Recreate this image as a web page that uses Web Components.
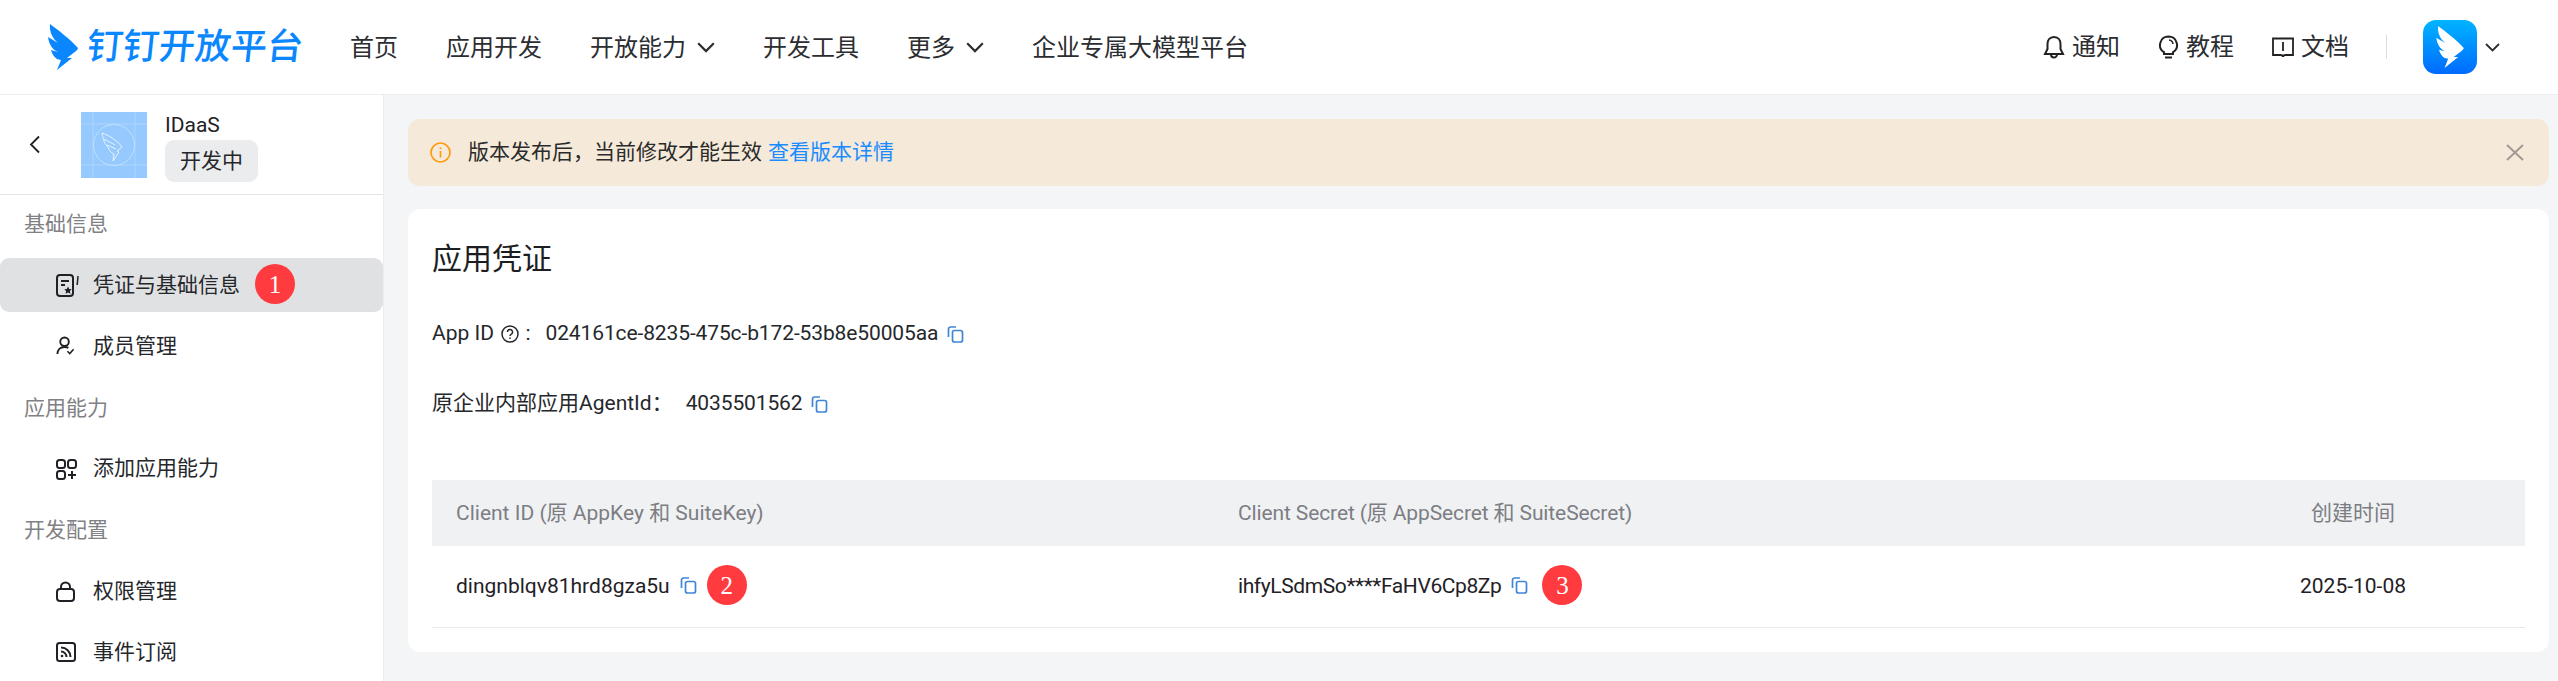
<!DOCTYPE html>
<html lang="zh-CN">
<head>
<meta charset="utf-8">
<title>钉钉开放平台</title>
<style>
  html, body { margin: 0; height: 100%; overflow: hidden; }
  body {
    font: 21px/1.5 Roboto, "Noto Sans CJK SC", sans-serif;
    color: #1f2126;
    background: #f4f5f7;
  }
</style>
</head>
<body>

<dev-console>
  <top-bar slot="top"></top-bar>
  <side-menu slot="side">
    <app-summary name="IDaaS" state="开发中"></app-summary>
    <menu-label>基础信息</menu-label>
    <menu-item icon="doc" active>凭证与基础信息<step-badge slot="extra">1</step-badge></menu-item>
    <menu-item icon="member">成员管理</menu-item>
    <menu-label>应用能力</menu-label>
    <menu-item icon="apps">添加应用能力</menu-item>
    <menu-label>开发配置</menu-label>
    <menu-item icon="lock">权限管理</menu-item>
    <menu-item icon="rss">事件订阅</menu-item>
  </side-menu>
  <notice-bar link="查看版本详情">版本发布后，当前修改才能生效</notice-bar>
  <cred-card heading="应用凭证">
    <cred-line gap="15">
      <span slot="label">App ID <help-mark></help-mark> :</span>
      <span>024161ce-8235-475c-b172-53b8e50005aa</span>
    </cred-line>
    <cred-line gap="13">
      <span slot="label">原企业内部应用AgentId：</span>
      <span>4035501562</span>
    </cred-line>
    <cred-table slot="table">
      <span slot="h1">Client ID (原 AppKey 和 SuiteKey)</span>
      <span slot="h2" style="letter-spacing:-.12px">Client Secret (原 AppSecret 和 SuiteSecret)</span>
      <span slot="h3">创建时间</span>
      <copy-text slot="c1" step="2" gap="10">dingnblqv81hrd8gza5u</copy-text>
      <copy-text slot="c2" step="3" gap="14" style="letter-spacing:-.4px">ihfyLSdmSo****FaHV6Cp8Zp</copy-text>
      <span slot="c3">2025-10-08</span>
    </cred-table>
  </cred-card>
</dev-console>

<script>
const chevron = (w, h) => `<svg width="${w}" height="${h}" viewBox="0 0 15 9" fill="none" stroke="currentColor" stroke-width="1.800"><path d="M1 1l6.500 6.500L14 1"/></svg>`;

const bird = (w, h) => `<svg width="${w}" height="${h}" viewBox="0 0 30 46"><path fill="currentColor" d="M2 0C10 6 22 15 30 24C30 25 29 26 28 27L19 34L24 34L9 46L13 36L9 35C6 33 4 30 3 26L10 28C5 26 1 21 0 13L10 19C5 15 1 8 2 0Z"/></svg>`;

const copyIcon = `<svg width="17" height="17" viewBox="0 0 17 17" fill="none" stroke="#3f86d8" stroke-width="1.700"><path d="M1.500 11V3A2 2 0 0 1 3.500 1H9"/><rect x="5.500" y="4.500" width="10" height="11.500" rx="2"/></svg>`;

const menuIcons = {
  doc: `<svg width="24" height="23" viewBox="0 0 24 23" fill="none" stroke="#1f2126" stroke-width="2"><rect x="1" y="1" width="16" height="21" rx="3"/><path d="M5 7h8M5 11h4"/><path d="M12 12.500l1.200 2.500 2.600.3-1.900 1.800.5 2.600-2.400-1.300-2.400 1.300.5-2.600-1.900-1.800 2.600-.3z" fill="#1f2126" stroke="none"/><path d="M22 2l-.8 9" stroke-width="1.500"/></svg>`,
  member: `<svg width="19" height="19" style="margin-top:-3px" viewBox="0 0 20 20" fill="none" stroke="#1f2126" stroke-width="2"><circle cx="9" cy="6" r="4.500"/><path d="M1.500 19c0-4.500 3-7.500 7.500-7.500 1.500 0 3 .4 4 1"/><path d="M12 16l2.500 2.500L18.500 14" stroke-width="1.600"/></svg>`,
  apps: `<svg width="21" height="21" viewBox="0 0 21 21" fill="none" stroke="#1f2126" stroke-width="2"><rect x="1" y="1" width="8" height="8" rx="2.500"/><rect x="12" y="1" width="8" height="8" rx="2.500"/><rect x="1" y="12" width="8" height="8" rx="2.500"/><path d="M16 12v8M12 16h8"/></svg>`,
  lock: `<svg width="19" height="21" viewBox="0 0 19 21" fill="none" stroke="#1f2126" stroke-width="2"><rect x="1" y="8" width="17" height="12" rx="3"/><path d="M5 8V6a4.500 4.500 0 0 1 9 0v2"/></svg>`,
  rss: `<svg width="20" height="20" style="margin-top:-2px" viewBox="0 0 20 20" fill="none" stroke="#1f2126" stroke-width="2"><rect x="1" y="1" width="18" height="18" rx="2.500"/><path d="M5 5.500a9.500 9.500 0 0 1 9.500 9.500M5 9.500a5.500 5.500 0 0 1 5.500 5.500"/><circle cx="6" cy="14" r="1.300" fill="#1f2126" stroke="none"/></svg>`
};

class DevConsole extends HTMLElement {
  constructor() {
    super();
    this.attachShadow({mode: 'open'});
    this.shadowRoot.innerHTML = `
      <style>
        :host { display: flex; flex-direction: column; height: 100vh; }
        .body { flex: 1; display: flex; min-height: 0; }
        main { flex: 1; min-width: 0; padding: 24px 9px 0 24px; display: flex; flex-direction: column; gap: 23px; }
      </style>
      <slot name="top"></slot>
      <div class="body">
        <slot name="side"></slot>
        <main><slot></slot></main>
      </div>
    `;
  }
}

class TopBar extends HTMLElement {
  constructor() {
    super();
    this.attachShadow({mode: 'open'});
    this.shadowRoot.innerHTML = `
      <style>
        :host {
          display: flex; align-items: center; flex: none;
          box-sizing: border-box; height: 95px;
          padding: 0 58px 0 48px;
          background: #fff; border-bottom: 1px solid #ebedf0;
          font-size: 24px; color: #2b2d31;
        }
        :host * { box-sizing: border-box; }
        .logo { display: flex; align-items: center; gap: 9px; width: 302px; color: #0a87ff; }
        .logo svg { display: block; margin-top: -1px; }
        .logo b {
          font-size: 36px; line-height: 46px; font-weight: 500; white-space: nowrap;
          transform: skewX(-6deg);
        }
        nav { display: flex; gap: 48px; margin-top: 1px; }
        nav a { display: flex; align-items: center; gap: 11px; }
        .tools { margin-left: auto; display: flex; align-items: center; }
        .tools a { display: flex; align-items: center; gap: 7px; margin-right: 38px; }
        .rule { width: 1px; height: 24px; background: #dcdee0; margin-right: 36px; }
        .avatar {
          width: 54px; height: 54px; border-radius: 13px;
          background: linear-gradient(#00b4ff, #006aff);
          display: flex; align-items: center; justify-content: center; color: #fff;
          margin-right: 8px;
        }
      </style>
      <div class="logo">
        ${bird(30, 46)}
        <b>钉钉开放平台</b>
      </div>
      <nav>
        <a>首页</a>
        <a>应用开发</a>
        <a>开放能力 ${chevron(18, 11)}</a>
        <a>开发工具</a>
        <a>更多 ${chevron(18, 11)}</a>
        <a>企业专属大模型平台</a>
      </nav>
      <div class="tools">
        <a><svg width="22" height="24" viewBox="0 0 22 24" fill="none" stroke="#222" stroke-width="2"><path d="M11 2C6.500 2 4.500 5.500 4.500 9v5L2 19h18l-2.500-5V9C17.500 5.500 15.500 2 11 2Z"/><path d="M8 19.500a3 3 0 0 0 6 0"/></svg>通知</a>
        <a><svg width="21" height="24" viewBox="0 0 21 24" fill="none" stroke="#222" stroke-width="2"><path d="M10.500 1.500a8.500 8.500 0 0 0-4.500 15.700V19h9v-1.800a8.500 8.500 0 0 0-4.500-15.700Z"/><path d="M7 22.500h7"/><path d="M11 5a4.500 4.500 0 0 1 4 4" stroke-width="1.500"/></svg>教程</a>
        <a style="margin-right:37px"><svg width="22" height="23" viewBox="0 0 22 23" fill="none" stroke="#222" stroke-width="1.800"><path d="M1 2.500h20V19h-7.500q-2.500 0-2.500 2 0-2-2.500-2H1Z"/><path d="M11 6v9"/></svg>文档</a>
        <span class="rule"></span>
        <span class="avatar">${bird(28, 42)}</span>
        ${chevron(15, 9)}
      </div>
    `;
  }
}

class SideMenu extends HTMLElement {
  constructor() {
    super();
    this.attachShadow({mode: 'open'});
    this.shadowRoot.innerHTML = `
      <style>
        :host {
          display: flex; flex-direction: column; flex: none;
          box-sizing: border-box; width: 384px; height: 100%;
          background: #fff; border-right: 1px solid #ebedf0; overflow: hidden;
        }
        .list { display: flex; flex-direction: column; gap: 7.25px; padding-top: 2px; }
      </style>
      <slot name="head"></slot>
      <div class="list"><slot></slot></div>
    `;
    this.querySelector('app-summary').slot = 'head';
  }
}

class AppSummary extends HTMLElement {
  constructor() {
    super();
    this.attachShadow({mode: 'open'});
    this.shadowRoot.innerHTML = `
      <style>
        :host {
          display: flex; align-items: center; flex: none;
          box-sizing: border-box; height: 100px; padding: 0 0 0 29px;
          border-bottom: 1px solid #e3e4e6;
        }
        .back { width: 11px; height: 19px; margin-right: 41px; color: #1f2126; }
        .tile { width: 66px; height: 66px; margin-right: 18px; flex: none; display: block; margin-top: 1px; }
        .meta { margin-top: 2px; }
        .name { line-height: 30px; }
        .tag {
          display: inline-block; height: 42px; line-height: 42px; padding: 0 15px;
          background: #ebecee; border-radius: 9px; color: #25272b;
        }
      </style>
      <svg class="back" viewBox="0 0 11 19" fill="none" stroke="currentColor" stroke-width="1.800"><path d="M10 1.500L2 9.500l8 8"/></svg>
      <svg class="tile" viewBox="0 0 66 66">
        <rect width="66" height="66" fill="#96c9fd"/>
        <g fill="none" stroke-width="1">
          <path stroke="#aed6fe" d="M12 0v66M54 0v66M0 12h66M0 53h66"/>
          <circle stroke="#bfe0ff" cx="33" cy="33" r="20.500"/>
          <path stroke="#e8f3ff" d="M21 21c6 2 15 7 20 14l-5 4 2 1-6 9 1-7c-3-1-5-4-6-7-3-2-5-8-6-14Z"/>
          <path stroke="#e8f3ff" d="M23 27l11 6M26 33l9 4"/>
        </g>
      </svg>
      <div class="meta">
        <div class="name">${this.getAttribute('name')}</div>
        <span class="tag">${this.getAttribute('state')}</span>
      </div>
    `;
  }
}

class MenuLabel extends HTMLElement {
  constructor() {
    super();
    this.attachShadow({mode: 'open'});
    this.shadowRoot.innerHTML = `
      <style>
        :host { display: flex; align-items: center; box-sizing: border-box; height: 54px; padding: 1px 0 0 24px; color: #7f8185; }
      </style>
      <slot></slot>
    `;
  }
}

class MenuItem extends HTMLElement {
  constructor() {
    super();
    this.attachShadow({mode: 'open'});
    const icon = menuIcons[this.getAttribute('icon')];
    this.shadowRoot.innerHTML = `
      <style>
        :host {
          display: flex; align-items: center; height: 54px; padding-left: 56px;
          border-radius: 9px; color: #25272b;
        }
        :host([active]) { background: #e0e1e3; }
        .icon { width: 37px; flex: none; display: flex; align-items: center; }
        ::slotted([slot="extra"]) { margin-left: 15px; margin-top: -2px; }
      </style>
      <span class="icon">${icon}</span>
      <slot></slot>
      <slot name="extra"></slot>
    `;
  }
}

class StepBadge extends HTMLElement {
  constructor() {
    super();
    this.attachShadow({mode: 'open'});
    this.shadowRoot.innerHTML = `
      <style>
        :host {
          display: inline-flex; align-items: center; justify-content: center; flex: none;
          width: 40px; height: 40px; border-radius: 50%;
          background: #ff3b3f; color: #fff; letter-spacing: 0;
          font: 25px/1 "Liberation Serif", serif;
        }
      </style>
      <slot></slot>
    `;
  }
}

class NoticeBar extends HTMLElement {
  constructor() {
    super();
    this.attachShadow({mode: 'open'});
    this.shadowRoot.innerHTML = `
      <style>
        :host {
          display: flex; align-items: center; flex: none;
          box-sizing: border-box; height: 67px; padding: 0 25px 0 22px;
          background: #f5eada; border-radius: 12px; color: #2b2b2b;
        }
        svg { flex: none; }
        .info { margin-right: 17px; }
        a { color: #1a8cff; margin-left: 6px; }
        .close { margin-left: auto; }
      </style>
      <svg class="info" width="21" height="21" viewBox="0 0 21 21" fill="none" stroke="#ff9a0f" stroke-width="1.700"><circle cx="10.500" cy="10.500" r="9.500"/><path d="M10.500 9v6.500"/><path d="M10.500 5.500v1.700"/></svg>
      <slot></slot>
      <a>${this.getAttribute('link')}</a>
      <svg class="close" width="18" height="17" viewBox="0 0 18 17" fill="none" stroke="#a09a92" stroke-width="2"><path d="M1 1l16 15M17 1L1 16"/></svg>
    `;
  }
}

class CredCard extends HTMLElement {
  constructor() {
    super();
    this.attachShadow({mode: 'open'});
    this.shadowRoot.innerHTML = `
      <style>
        :host {
          display: block; flex: none;
          box-sizing: border-box; height: 443px; padding: 27px 24px 0;
          background: #fff; border-radius: 12px;
        }
        h2 { margin: 0 0 18px; font-size: 30px; line-height: 45px; font-weight: 400; color: #1c1e22; }
        ::slotted([slot="table"]) { margin-top: 41px; }
      </style>
      <h2>${this.getAttribute('heading')}</h2>
      <slot></slot>
      <slot name="table"></slot>
    `;
  }
}

class CredLine extends HTMLElement {
  constructor() {
    super();
    this.attachShadow({mode: 'open'});
    const gap = this.getAttribute('gap') || '17';
    this.shadowRoot.innerHTML = `
      <style>
        :host { display: flex; align-items: center; height: 70px; color: #25272b; white-space: nowrap; }
        .val { display: inline-flex; align-items: center; gap: 9px; margin-left: ${gap}px; letter-spacing: -.12px; }
      </style>
      <slot name="label"></slot>
      <span class="val"><slot></slot>${copyIcon}</span>
    `;
  }
}

class HelpMark extends HTMLElement {
  constructor() {
    super();
    this.attachShadow({mode: 'open'});
    this.shadowRoot.innerHTML = `
      <style>
        :host { display: inline-block; vertical-align: -3px; width: 18px; height: 18px; margin: 0 1px 0 2px; }
        svg { display: block; }
      </style>
      <svg width="18" height="18" viewBox="0 0 18 18" fill="none" stroke="#25272b" stroke-width="1.500"><circle cx="9" cy="9" r="8"/><path d="M6.500 7a2.500 2.500 0 1 1 3.600 2.300c-.8.400-1.100.9-1.100 1.700"/><path d="M9 12.500v1.500"/></svg>
    `;
  }
}

class CopyText extends HTMLElement {
  constructor() {
    super();
    this.attachShadow({mode: 'open'});
    const gap = this.getAttribute('gap') || '11';
    this.shadowRoot.innerHTML = `
      <style>
        :host { display: inline-flex; align-items: center; white-space: nowrap; }
        svg { margin: -3px 0 0 10px; }
        step-badge { margin: -3px 0 0 ${gap}px; }
      </style>
      <slot></slot>${copyIcon}<step-badge>${this.getAttribute('step')}</step-badge>
    `;
  }
}

class CredTable extends HTMLElement {
  constructor() {
    super();
    this.attachShadow({mode: 'open'});
    this.shadowRoot.innerHTML = `
      <style>
        :host { display: grid; grid-template-columns: 782px 967px 1fr; }
        .head { height: 66px; box-sizing: border-box; padding-top: 1px; background: #f0f1f3; color: #7c7e83; display: flex; align-items: center; padding-left: 24px; }
        .cell { height: 82px; box-sizing: border-box; border-bottom: 1px solid #e8e9eb; display: flex; align-items: center; padding-left: 24px; color: #1f2126; }
        .mid { justify-content: center; padding-left: 0; }
      </style>
      <div class="head"><slot name="h1"></slot></div>
      <div class="head"><slot name="h2"></slot></div>
      <div class="head mid"><slot name="h3"></slot></div>
      <div class="cell"><slot name="c1"></slot></div>
      <div class="cell"><slot name="c2"></slot></div>
      <div class="cell mid"><slot name="c3"></slot></div>
    `;
  }
}

customElements.define('step-badge', StepBadge);
customElements.define('dev-console', DevConsole);
customElements.define('top-bar', TopBar);
customElements.define('side-menu', SideMenu);
customElements.define('app-summary', AppSummary);
customElements.define('menu-label', MenuLabel);
customElements.define('menu-item', MenuItem);
customElements.define('notice-bar', NoticeBar);
customElements.define('cred-card', CredCard);
customElements.define('cred-line', CredLine);
customElements.define('help-mark', HelpMark);
customElements.define('copy-text', CopyText);
customElements.define('cred-table', CredTable);
</script>
</body>
</html>
